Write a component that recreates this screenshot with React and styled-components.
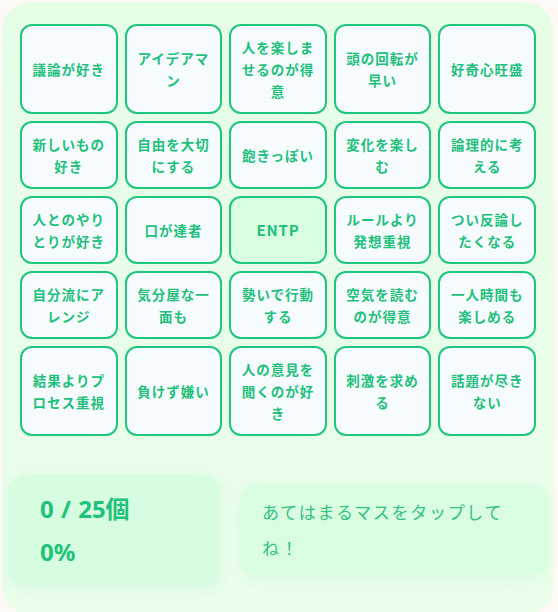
import React from "react"
import styled, { createGlobalStyle } from "styled-components"

const GlobalStyle = createGlobalStyle`
    html, body {
        margin: 0;
        padding: 0;
        background: #fff9f6;
    }
    body {
        font-family: "Noto Sans CJK JP", "Noto Sans", sans-serif;
    }
`

const Board = styled.div`
    margin: 2px 0 0 2px;
    width: 551px;
    box-sizing: border-box;
    padding: 22px 5px 30px 6px;
    border-radius: 28px;
    background: linear-gradient(180deg, #e6fde6 0%, #eafeea 100%);
`

const Grid = styled.div`
    margin: 0 12px 0 12px;
    display: grid;
    grid-template-columns: repeat(5, 1fr);
    column-gap: 7px;
    row-gap: 7px;
`

const Cell = styled.div`
    box-sizing: border-box;
    display: flex;
    align-items: center;
    justify-content: center;
    padding: 10px 7px;
    border: 2px solid #1fc67e;
    border-radius: 12px;
    background: ${p => (p.center ? "#d8fde0" : "#f6fbff")};
    color: #22c07b;
    font-size: ${p => (p.center ? "15px" : "13.5px")};
    font-weight: 700;
    line-height: 22px;
    letter-spacing: ${p => (p.center ? "0.8px" : "1px")};
    text-align: center;
    word-break: break-all;
`

const Footer = styled.div`
    margin-top: 39px;
    display: flex;
    align-items: center;
    gap: 20px;
`

const Stats = styled.div`
    box-sizing: border-box;
    width: 212px;
    padding: 12px 0 12px 32px;
    border-radius: 18px;
    background: #d6fde0;
    box-shadow: 0 4px 14px rgba(60, 200, 120, 0.1);
`

const StatLine = styled.div`
    color: #1fc27a;
    font-family: "Noto Sans", "Noto Sans CJK JP", sans-serif;
    font-size: 24px;
    font-weight: 700;
    line-height: 43px;
    word-spacing: 1px;
`

const Message = styled.div`
    box-sizing: border-box;
    width: 308px;
    padding: 9px 24px 9px 22px;
    border-radius: 16px;
    background: #d8fde0;
    box-shadow: 0 4px 14px rgba(60, 200, 120, 0.08);
    color: #36c184;
    font-size: 17px;
    font-weight: 400;
    letter-spacing: 1.7px;
    line-height: 36px;
`

const words = [
    "議論が好き", "アイデアマン", "人を楽しませるのが得意", "頭の回転が早い", "好奇心旺盛",
    "新しいもの好き", "自由を大切にする", "飽きっぽい", "変化を楽しむ", "論理的に考える",
    "人とのやりとりが好き", "口が達者", "ENTP", "ルールより発想重視", "つい反論したくなる",
    "自分流にアレンジ", "気分屋な一面も", "勢いで行動する", "空気を読むのが得意", "一人時間も楽しめる",
    "結果よりプロセス重視", "負けず嫌い", "人の意見を聞くのが好き", "刺激を求める", "話題が尽きない",
]

const App = () => {
    return (
        <>
            <GlobalStyle />
            <Board>
                <Grid>
                    {words.map((w, i) => (
                        <Cell key={i} center={i === 12}>{w}</Cell>
                    ))}
                </Grid>
                <Footer>
                    <Stats>
                        <StatLine>0 / 25個</StatLine>
                        <StatLine>0%</StatLine>
                    </Stats>
                    <Message>あてはまるマスをタップしてね！</Message>
                </Footer>
            </Board>
        </>
    )
}

export default App
